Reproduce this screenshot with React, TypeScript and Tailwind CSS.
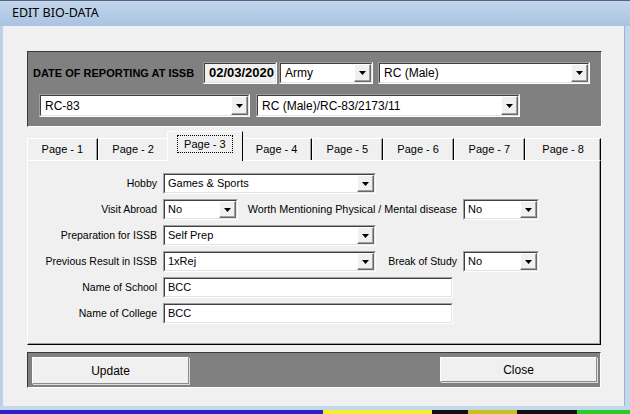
import React from 'react';

const SANS = 'font-["Liberation_Sans",Arial,sans-serif]';

function Arrow() {
  return (
    <svg width="7" height="4" viewBox="0 0 7 4">
      <polygon points="0,0 7,0 3.5,4" fill="#000" />
    </svg>
  );
}

function Combo({
  size,
  text,
  textClass = 'text-[11px]',
  bg = 'bg-white',
  btn = true,
}: {
  size: string;
  text: string;
  textClass?: string;
  bg?: string;
  btn?: boolean;
}) {
  return (
    <div
      className={`${size} flex shrink-0 border border-t-[#a0a0a0] border-l-[#a0a0a0] border-b-white border-r-white`}
    >
      <div
        className={`flex flex-1 min-w-0 border border-t-[#404040] border-l-[#404040] border-b-[#e3e3e3] border-r-[#e3e3e3] ${bg}`}
      >
        <span className={`flex flex-1 items-center pl-[3px] whitespace-nowrap overflow-hidden text-black ${textClass}`}>
          {text}
        </span>
        {btn && (
          <div className="w-[17px] flex items-center justify-center bg-[#f0f0f0] border border-t-white border-l-white border-b-[#696969] border-r-[#696969] shadow-[inset_-1px_-1px_0_#a0a0a0]">
            <Arrow />
          </div>
        )}
      </div>
    </div>
  );
}

const tabs = [
  { label: 'Page - 1', w: 'w-[71px]' },
  { label: 'Page - 2', w: 'w-[71px]' },
  { label: 'Page - 3', w: 'w-[71px]', active: true },
  { label: 'Page - 4', w: 'w-[71px]' },
  { label: 'Page - 5', w: 'w-[71px]' },
  { label: 'Page - 6', w: 'w-[71px]' },
  { label: 'Page - 7', w: 'w-[72px]' },
  { label: 'Page - 8', w: 'w-[76px]' },
];

function Label({
  text,
  className = 'w-[129px]',
  size = 'text-[10.5px]',
}: {
  text: string;
  className?: string;
  size?: string;
}) {
  return (
    <span className={`${className} ${size} shrink-0 text-right text-black whitespace-nowrap`}>{text}</span>
  );
}

function Btn({ text, size }: { text: string; size: string }) {
  return (
    <div
      className={`${size} flex items-center justify-center bg-[#f0f0f0] border border-t-white border-l-white border-b-[#8c8c8c] border-r-[#8c8c8c] shadow-[1px_1px_0_#dcdcdc] text-[12px] text-black`}
    >
      {text}
    </div>
  );
}

export default function App() {
  return (
    <div className={`w-[630px] h-[414px] flex flex-col overflow-hidden ${SANS}`}>
      {/* title bar */}
      <div className="h-[26px] shrink-0 flex items-center pl-[12px] bg-gradient-to-b from-[#c3d6ec] to-[#a9c3e1] border-t border-t-[#56667c]">
        <span className='text-[12.5px] text-black font-["Noto_Sans",sans-serif]'>EDIT BIO-DATA</span>
      </div>

      <div className="flex flex-1 min-h-0">
        <div className="w-[3px] bg-[#bcd0e8]" />
        <div className="flex-1 bg-[#f0f0f0] flex flex-col pl-[24px]">
          {/* top panel */}
          <div className="mt-[25px] w-[575px] h-[76px] bg-[#808080] border border-t-[#3a3a3a] border-l-[#3a3a3a] border-b-white border-r-white flex flex-col pt-[10px]">
            <div className="flex items-center pl-[5px]">
              <span className="w-[170px] text-[11px] font-bold text-black whitespace-nowrap">
                DATE OF REPORTING AT ISSB
              </span>
              <Combo size="w-[74px] h-[22px]" text="02/03/2020" textClass="text-[13px] font-bold justify-center pl-0" bg="bg-[#f0f0f0]" btn={false} />
              <div className="w-[2px]" />
              <Combo size="w-[94px] h-[22px]" text="Army" textClass="text-[12px] pl-[4px]" />
              <div className="w-[5px]" />
              <Combo size="w-[212px] h-[22px]" text="RC (Male)" textClass="text-[12px] pl-[4px]" />
            </div>
            <div className="flex items-center pl-[11px] mt-[10px]">
              <Combo size="w-[211px] h-[23px]" text="RC-83" textClass="text-[12px] pl-[4px]" />
              <div className="w-[6px]" />
              <Combo size="w-[264px] h-[23px]" text="RC (Male)/RC-83/2173/11" textClass="text-[12px] pl-[4px]" />
            </div>
          </div>

          {/* tabs */}
          <div className="mt-[8px] h-[25px] w-[574px] flex items-end">
            {tabs.map((t) =>
              t.active ? (
                <div
                  key={t.label}
                  className={`${t.w} relative z-10 -mx-[2px] box-content px-[2px] h-[26px] -mb-[1px] bg-[#f0f0f0] border-l border-t border-l-white border-t-white border-r border-r-black flex items-start justify-center pt-[3px]`}
                >
                  <span className="border border-dotted border-black px-[6px] h-[18px] flex items-center text-[11px] text-black">
                    {t.label}
                  </span>
                </div>
              ) : (
                <div
                  key={t.label}
                  className={`${t.w} h-[22px] bg-[#f0f0f0] border-l border-t border-l-white border-t-white border-r border-r-black shadow-[inset_-1px_0_0_#a0a0a0] flex items-center justify-center text-[11px] text-black`}
                >
                  {t.label}
                </div>
              )
            )}
          </div>

          {/* tab panel */}
          <div className="w-[574px] h-[185px] border border-t-white border-l-white border-r-black border-b-black shadow-[inset_-1px_-1px_0_#a0a0a0] flex flex-col gap-[5px] pt-[12px]">
            <div className="flex items-center gap-[6px]">
              <Label text="Hobby" />
              <Combo size="w-[213px] h-[21px]" text="Games & Sports" />
            </div>
            <div className="flex items-center gap-[6px]">
              <Label text="Visit Abroad" />
              <Combo size="w-[75px] h-[21px]" text="No" />
              <Label text="Worth Mentioning Physical / Mental disease" className="w-[213px]" size="text-[10.8px]" />
              <Combo size="w-[76px] h-[21px]" text="No" />
            </div>
            <div className="flex items-center gap-[6px]">
              <Label text="Preparation for ISSB" />
              <Combo size="w-[213px] h-[21px]" text="Self Prep" />
            </div>
            <div className="flex items-center gap-[6px]">
              <Label text="Previous Result in ISSB" />
              <Combo size="w-[213px] h-[21px]" text="1xRej" />
              <Label text="Break of Study" className="w-[75px]" />
              <Combo size="w-[76px] h-[21px]" text="No" />
            </div>
            <div className="flex items-center gap-[6px]">
              <Label text="Name of School" />
              <Combo size="w-[290px] h-[21px]" text="BCC" btn={false} />
            </div>
            <div className="flex items-center gap-[6px]">
              <Label text="Name of College" />
              <Combo size="w-[290px] h-[21px]" text="BCC" btn={false} />
            </div>
          </div>

          {/* bottom panel */}
          <div className="mt-[7px] w-[574px] h-[36px] bg-[#808080] border border-t-[#3a3a3a] border-l-[#3a3a3a] border-b-white border-r-white flex items-start justify-between pl-[4px] pr-[3px] pt-[4px]">
            <Btn text="Update" size="w-[157px] h-[27px]" />
            <Btn text="Close" size="w-[157px] h-[25px]" />
          </div>
        </div>
        <div className="w-[6px] bg-[#c4d7ed] border-l border-l-[#9fb4cc]" />
      </div>

      <div className="h-[4px] shrink-0 bg-[#c4d7ed]" />
      {/* strip of the desktop behind */}
      <div className="h-[4px] shrink-0 flex">
        <div className="w-[323px] bg-[#2a22c8]" />
        <div className="w-[109px] bg-[#f2ee2a]" />
        <div className="w-[36px] bg-[#101010]" />
        <div className="w-[49px] bg-[#c8c020]" />
        <div className="w-[60px] bg-[#101010]" />
        <div className="flex-1 bg-[#2ccc2c]" />
      </div>
    </div>
  );
}
